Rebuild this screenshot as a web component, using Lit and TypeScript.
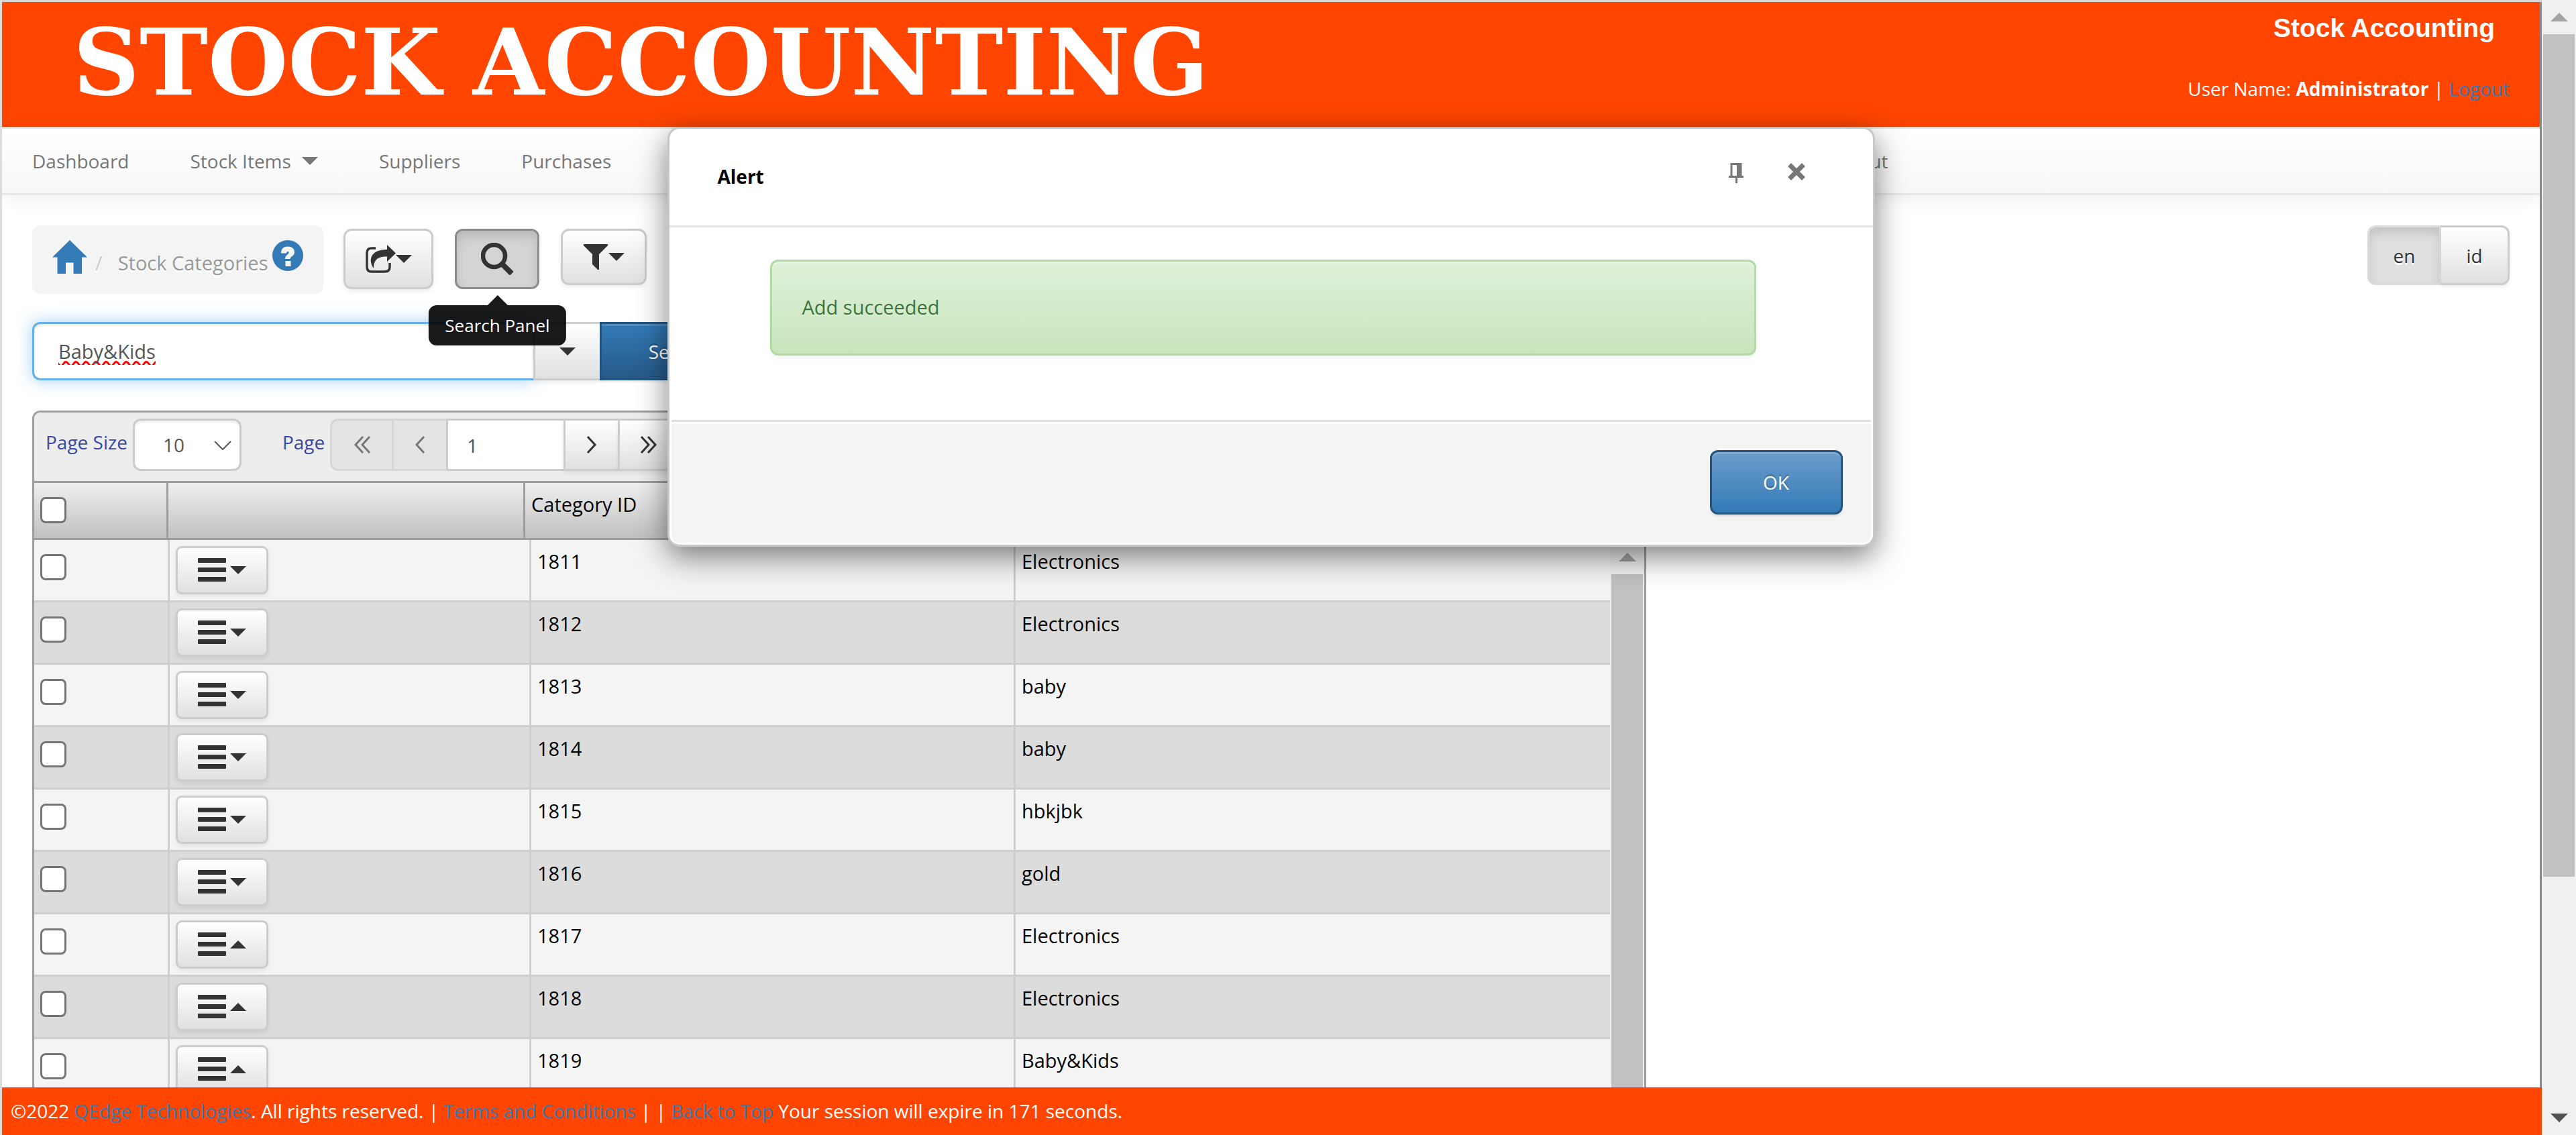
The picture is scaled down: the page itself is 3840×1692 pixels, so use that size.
import { LitElement, html, css, svg } from "lit";
import { customElement, state } from "lit/decorators.js";
import { classMap } from "lit/directives/class-map.js";

interface Category {
  id: number;
  name: string;
  up?: boolean;
}

const CATEGORIES: Category[] = [
  { id: 1811, name: "Electronics" },
  { id: 1812, name: "Electronics" },
  { id: 1813, name: "baby" },
  { id: 1814, name: "baby" },
  { id: 1815, name: "hbkjbk" },
  { id: 1816, name: "gold" },
  { id: 1817, name: "Electronics", up: true },
  { id: 1818, name: "Electronics", up: true },
  { id: 1819, name: "Baby&Kids", up: true },
];

const icon = (w: number, h: number, body: unknown) =>
  html`<svg class="icon" width=${w} height=${h} viewBox="0 0 ${w} ${h}" aria-hidden="true">${body}</svg>`;

const caretDown = () => icon(24, 12, svg`<path d="M0 0H24L12 12Z" fill="currentColor"/>`);
const caretUp = () => icon(24, 12, svg`<path d="M0 12H24L12 0Z" fill="currentColor"/>`);
const home = () => icon(52, 50, svg`<path d="M26 0L52 25.500H44V50H31.500V33.500H20V50H7.500V25.500H0Z" fill="currentColor"/>`);
const question = () =>
  icon(46, 46, svg`<circle cx="23" cy="23" r="23" fill="currentColor"/>
    <path d="M13 19.500C13 12.500 17 9.500 23 9.500S33 12.500 33 18C33 24 26.500 24 26.500 28H19C19 22 24.500 21.500 24.500 18.500C24.500 16.500 21.500 16.500 21 19.500Z" fill="#f4f4f4"/>
    <rect x="19.500" y="31" width="8" height="8" fill="#f4f4f4"/>`);
const share = () =>
  icon(45, 42, svg`<path d="M15 5H9Q2 5 2 12V33Q2 40 9 40H28Q36 40 36 33V27" fill="none" stroke="currentColor" stroke-width="3.500"/>
    <path d="M32 0L45 12.500L32 25V17.500C20 17 12 21 12 35C4 24 6 7 32 7Z" fill="currentColor"/>`);
const magnifier = () =>
  icon(48, 48, svg`<circle cx="19.500" cy="19.500" r="16.500" fill="none" stroke="currentColor" stroke-width="6.500"/>
    <path d="M32 32L43 43" stroke="currentColor" stroke-width="8" stroke-linecap="square"/>`);
const funnel = () =>
  icon(38, 38, svg`<path d="M1 0H37Q38 1 37 2L24 15V38H22L14 30V15L1 2Q0 1 1 0Z" fill="currentColor"/>`);
const bars = () =>
  icon(42, 36, svg`<g fill="currentColor"><rect y="0" width="42" height="7" rx="1"/><rect y="14" width="42" height="7" rx="1"/><rect y="28" width="42" height="7" rx="1"/></g>`);
const stroke = (w: number, d: string) =>
  icon(w, 26, svg`<path d=${d} fill="none" stroke="currentColor" stroke-width="3"/>`);
const first = () => stroke(26, "M14 1L3 13L14 25M24 1L13 13L24 25");
const prev = () => stroke(16, "M14 1L3 13L14 25");
const next = () => stroke(16, "M2 1L13 13L2 25");
const last = () => stroke(26, "M2 1L13 13L2 25M12 1L23 13L12 25");
const pin = () =>
  icon(22, 30, svg`<path d="M4 1.500H18V20M4 0V20" fill="none" stroke="currentColor" stroke-width="3"/>
    <path d="M12 1H19V20H12ZM0 19H22V22H0ZM10 22H13V30H10Z" fill="currentColor"/>`);
const cross = () =>
  icon(26, 26, svg`<path d="M5 5L21 21M21 5L5 21" stroke="currentColor" stroke-width="7" stroke-linecap="square"/>`);
const scrollUp = () => icon(26, 13, svg`<path d="M0 13H26L13 0Z" fill="currentColor"/>`);
const scrollDown = () => icon(26, 13, svg`<path d="M0 0H26L13 13Z" fill="currentColor"/>`);

@customElement("app-root")
export class AppRoot extends LitElement {
  @state() private alertOpen = true;

  static styles = css`
    :host {
      display: block;
      height: 100vh;
      overflow: hidden;
      background: #fff;
      color: #000;
      font: 28px/40px "Open Sans", "Noto Sans", sans-serif;
    }
    * { box-sizing: border-box; }
    button, input, select { font: inherit; margin: 0; }
    a { color: #337ab7; text-decoration: none; }
    ul { list-style: none; margin: 0; padding: 0; display: flex; gap: 1px; }
    .icon { display: block; flex: none; }

    .window { display: flex; height: 100%; }
    .page {
      flex: 1; min-width: 0; display: flex; flex-direction: column;
      position: relative; border-left: 3px solid #dcdcdc; border-top: 3px solid #d8d8d8;
    }
    .body {
      flex: 1; min-height: 0; overflow: hidden; display: flex; flex-direction: column;
      border-right: 3px solid #8a8a8a;
    }

    .banner {
      flex: none; height: 186px; background: #ff4500; color: #fff;
      display: flex; justify-content: space-between; align-items: flex-start;
    }
    .logo {
      margin: 0; padding: 10px 0 0 106px;
      font: bold 137px/160px "DejaVu Serif", serif; white-space: nowrap;
    }
    .account { text-align: right; padding: 15px 45px 0 0; }
    .product { margin: 0; padding-right: 22px; font: bold 39px/48px "Liberation Sans", Arial, sans-serif; }
    .user { margin: 0; padding-top: 46px; }

    .nav {
      flex: none; height: 102px; border-top: 3px solid #e7e7e7; border-bottom: 3px solid #e7e7e7;
      background: linear-gradient(#fff, #f8f8f8); box-shadow: 0 3px 27px rgba(0, 0, 0, .075);
      display: flex; align-items: center; justify-content: space-between;
    }
    .nav-end { width: calc(29% + 10px); }
    .nav a { color: #777; padding: 0 45px; display: flex; align-items: center; gap: 16px; }

    .content { padding: 45px 45px 0; }
    .toolbar { display: flex; align-items: flex-start; gap: 30px; }
    .crumbs {
      height: 102px; padding: 0 30px; border-radius: 12px; background: #f4f4f4;
      display: flex; align-items: flex-start; color: #999; font-size: 29px; text-shadow: 0 3px 0 #fff;
    }
    .crumbs a { padding-top: 22px; }
    .crumbs .here { padding: 36px 7px 0 23px; }
    .crumbs .sep { padding: 36px 0 0 12px; color: #ccc; }
    .tools { display: flex; align-items: flex-start; gap: 32px; padding-top: 5px; }
    .btn {
      display: flex; align-items: center; justify-content: center; padding: 0;
      border: 3px solid #ccc; border-radius: 12px; color: #333;
      background: linear-gradient(#fff, #e0e0e0); text-shadow: 0 3px 0 #fff;
      box-shadow: 0 3px 6px rgba(0, 0, 0, .075);
    }
    .tool { height: 90px; width: 134px; }
    .tool-wrap { position: relative; }
    .pressed {
      width: 126px; border-color: #8c8c8c; background: #d4d4d4;
      box-shadow: inset 0 9px 15px rgba(0, 0, 0, .125);
    }
    .short { height: 84px; width: 128px; }
    .tip {
      position: absolute; top: 114px; left: 50%; transform: translateX(-50%);
      padding: 10px 24px; border-radius: 12px; background: rgba(0, 0, 0, .9); color: #fff;
      font-size: 26px; white-space: nowrap; z-index: 2;
    }
    .tip::before {
      content: ""; position: absolute; top: -15px; left: 50%; margin-left: -15px;
      border: 15px solid transparent; border-top: 0; border-bottom-color: rgba(0, 0, 0, .9);
    }
    .langs { display: flex; margin-left: auto; }
    .lang { height: 89px; width: 102px; }
    .lang.active {
      width: 110px; border-color: #dbdbdb; border-radius: 12px 0 0 12px; background: #e0e0e0;
      box-shadow: inset 0 9px 15px rgba(0, 0, 0, .125);
    }
    .lang.other { border-left: 0; border-radius: 0 12px 12px 0; }

    .search { display: flex; margin-top: 42px; height: 87px; }
    .term {
      width: 747px; padding: 0 36px; border: 3px solid #66afe9; border-right: 0; border-radius: 12px 0 0 12px;
      background: #fff; color: #555; outline: 0; font-size: 29px;
      text-decoration: underline wavy #f00 3px; text-underline-offset: 3px; text-decoration-skip-ink: none;
      box-shadow: inset 0 3px 3px rgba(0, 0, 0, .075), 0 0 24px rgba(102, 175, 233, .6);
    }
    .mode { position: relative; width: 99px; border-radius: 0; border-right-width: 0; }
    .primary {
      border-color: #245580; color: #fff; text-shadow: 0 -3px 0 rgba(0, 0, 0, .2);
      background: linear-gradient(#337ab7, #265a88);
      box-shadow: inset 0 3px 0 rgba(255, 255, 255, .15), 0 3px 3px rgba(0, 0, 0, .075);
    }
    .go { width: 234px; border-radius: 0 12px 12px 0; }

    .grid { width: 2406px; max-width: 100%; margin-top: 45px; border: 3px solid #9e9e9e; border-radius: 12px 12px 0 0; overflow: hidden; }
    .pager {
      height: 105px; padding: 9px 17px; display: flex; align-items: flex-start;
      background: #ededed; border-bottom: 3px solid #9e9e9e;
    }
    .pager label { color: #3a49a2; padding: 15px 8px 0 0; white-space: nowrap; }
    .size-wrap { position: relative; margin-right: 61px; color: #555; }
    .size-wrap .chev { position: absolute; right: 15px; top: 33px; pointer-events: none; }
    .size {
      appearance: none; width: 162px; height: 78px; padding: 6px 42px; color: #555; background: #fff;
      border: 3px solid #ccc; border-radius: 12px; box-shadow: inset 0 3px 3px rgba(0, 0, 0, .075);
    }
    .step { width: 81px; height: 78px; border-radius: 0; border-right-width: 0; }
    .step.outer { width: 92px; }
    .step.start { border-radius: 12px 0 0 12px; }
    .step.end { border-right-width: 3px; border-radius: 0 12px 12px 0; }
    .step:disabled { color: #777; border-color: #d6d6d6; background: #e4e4e4; box-shadow: none; }
    .number {
      width: 175px; height: 78px; padding: 2px 28px 0; border: 3px solid #ccc; border-right: 0;
      background: #fff; color: #555; border-radius: 0;
    }

    table { border-collapse: separate; border-spacing: 0; table-layout: fixed; width: 100%; font-size: 29px; }
    th, td { padding: 0; text-align: left; font-weight: 400; vertical-align: top; }
    th {
      height: 85px; padding: 12px 9px 0; border-right: 3px solid #9e9e9e; border-bottom: 3px solid #9e9e9e;
      background: linear-gradient(#f0f0f0, #c0c0c0);
    }
    th:last-child { border-right: 0; }
    .h-check { width: 200px; }
    .h-menu { width: 532px; }
    .h-id { width: 722px; }
    td { height: 93px; padding: 12px 9px 0; border-right: 3px solid #cecece; border-bottom: 3px solid #cecece; }
    td:last-child { border-right: 0; }
    .c-check { width: 202px; }
    .c-menu { width: 539px; }
    .c-id { width: 722px; }
    tbody tr { background: #f4f4f4; }
    tbody tr.alt { background: #dcdcdc; }
    .check {
      appearance: none; display: block; width: 39px; height: 39px; margin-top: 9px;
      border: 3px solid #767676; border-radius: 8px; background: #fff;
    }
    .menu-cell { padding-top: 9px; }
    .menu { width: 138px; height: 72px; gap: 6px; border-radius: 9px; }
    .rows { display: flex; }

    .scroll { flex: none; width: 51px; background: #f0f0f0; display: flex; flex-direction: column; align-items: center; color: #a3a3a3; }
    .arrow { flex: none; height: 51px; display: flex; align-items: center; }
    .thumb { width: 47px; background: #c1c1c1; flex: 1; }
    .track { flex: 1; display: flex; flex-direction: column; }
    .track .thumb { flex: 0 0 79%; }
    .arrow.on { color: #505050; }

    .footer { flex: none; height: 71px; padding: 13px; background: #ff4500; color: #fff; line-height: 44px; white-space: nowrap; }

    .layer { position: absolute; top: 186px; left: -3px; right: 0; display: flex; justify-content: center; z-index: 3; pointer-events: none; }
    .modal {
      width: 1800px; max-width: 100%; pointer-events: auto; background: #fff; border: 3px solid #c8c8c8; border-radius: 18px;
      box-shadow: 0 15px 45px rgba(0, 0, 0, .5); padding-bottom: 3px;
    }
    .modal-head { height: 147px; padding: 0 98px 0 72px; border-bottom: 3px solid #e5e5e5; display: flex; align-items: flex-start; gap: 60px; }
    .modal-title { margin: 0; flex: 1; padding-top: 51px; font-size: 28px; line-height: 40px; }
    .plain { border: 0; background: none; padding: 51px 3px 0; color: #777; }
    .modal-body { padding: 48px 174px 96px 150px; }
    .success {
      margin: 0; height: 143px; padding: 48px 45px; border: 3px solid #b2dba1; border-radius: 12px; color: #3c763d; font-size: 29px;
      background: linear-gradient(#dff0d8, #c8e5bc); text-shadow: 0 3px 0 rgba(255, 255, 255, .2);
      box-shadow: inset 0 3px 0 rgba(255, 255, 255, .25), 0 3px 6px rgba(0, 0, 0, .05);
    }
    .modal-foot {
      margin: 0 3px; height: 183px; padding: 42px 42px 0; display: flex; justify-content: flex-end;
      border-top: 3px solid #ddd; background: #f4f4f4; box-shadow: inset 0 3px 0 #fff; border-radius: 0 0 12px 12px;
    }
    .ok { width: 198px; height: 96px; background: linear-gradient(#6b9dcb, #337ab7); }
  `;

  private scrollArrow(up: boolean, on = false) {
    return html`<div class=${classMap({ arrow: true, on })}>${up ? scrollUp() : scrollDown()}</div>`;
  }

  private row(c: Category, i: number) {
    return html`<tr class=${classMap({ alt: i % 2 === 1 })}>
      <td><input class="check" type="checkbox" aria-label=${c.id}></td>
      <td class="menu-cell">
        <button class="btn menu" aria-label="Menu">${bars()}${c.up ? caretUp() : caretDown()}</button>
      </td>
      <td>${c.id}</td>
      <td>${c.name}</td>
    </tr>`;
  }

  private modal() {
    const close = () => (this.alertOpen = false);
    return html`<div class="layer">
      <section class="modal" role="dialog" aria-labelledby="alert-title">
        <div class="modal-head">
          <h2 class="modal-title" id="alert-title">Alert</h2>
          <button class="plain" aria-label="Pin">${pin()}</button>
          <button class="plain" aria-label="Close" @click=${close}>${cross()}</button>
        </div>
        <div class="modal-body"><p class="success">Add succeeded</p></div>
        <div class="modal-foot"><button class="btn primary ok" @click=${close}>OK</button></div>
      </section>
    </div>`;
  }

  render() {
    return html`<div class="window">
      <div class="page">
        <div class="body">
          <header class="banner">
            <h1 class="logo">STOCK ACCOUNTING</h1>
            <div class="account">
              <p class="product">Stock Accounting</p>
              <p class="user">User Name: <b>Administrator</b> | <a href="#">Logout</a></p>
            </div>
          </header>
          <nav class="nav">
            <ul>
              <li><a href="#">Dashboard</a></li>
              <li><a href="#">Stock Items ${caretDown()}</a></li>
              <li><a href="#">Suppliers</a></li>
              <li><a href="#">Purchases</a></li>
            </ul>
            <ul class="nav-end"><li><a href="#">Logout</a></li></ul>
          </nav>
          <main class="content">
            <div class="toolbar">
              <div class="crumbs">
                <a href="#" aria-label="Home">${home()}</a>
                <span class="sep">/</span>
                <span class="here">Stock Categories</span>
                <a href="#" aria-label="Help">${question()}</a>
              </div>
              <div class="tools">
                <button class="btn tool" aria-label="Export">${share()}${caretDown()}</button>
                <div class="tool-wrap">
                  <button class="btn tool pressed" aria-labelledby="tip">${magnifier()}</button>
                  <div class="tip" role="tooltip" id="tip">Search Panel</div>
                </div>
                <button class="btn tool short" aria-label="Filter">${funnel()}${caretDown()}</button>
              </div>
              <div class="langs">
                <button class="btn lang active">en</button>
                <button class="btn lang other">id</button>
              </div>
            </div>

            <form class="search" @submit=${(e: Event) => e.preventDefault()}>
              <input class="term" type="text" aria-label="Search" .value=${"Baby&Kids"}>
              <button class="btn mode" type="button" aria-label="Search type">${caretDown()}</button>
              <button class="btn primary go">Search</button>
            </form>

            <section class="grid">
              <div class="pager">
                <label for="size">Page Size</label>
                <div class="size-wrap">
                  <select class="size" id="size"><option>10</option></select>
                  <span class="chev">${icon(26, 14, svg`<path d="M1 1L13 13L25 1" fill="none" stroke="currentColor" stroke-width="2"/>`)}</span>
                </div>
                <label for="page">Page</label>
                <button class="btn step outer start" disabled aria-label="First">${first()}</button>
                <button class="btn step" disabled aria-label="Previous">${prev()}</button>
                <input class="number" id="page" type="text" .value=${"1"}>
                <button class="btn step" aria-label="Next">${next()}</button>
                <button class="btn step outer end" aria-label="Last">${last()}</button>
              </div>
              <table>
                <thead>
                  <tr>
                    <th class="h-check"><input class="check" type="checkbox" aria-label="Select all"></th>
                    <th class="h-menu"></th>
                    <th class="h-id">Category ID</th>
                    <th></th>
                  </tr>
                </thead>
              </table>
              <div class="rows">
                <table>
                  <colgroup><col class="c-check"><col class="c-menu"><col class="c-id"><col></colgroup>
                  <tbody>${CATEGORIES.map((c, i) => this.row(c, i))}</tbody>
                </table>
                <div class="scroll">${this.scrollArrow(true)}<div class="thumb"></div></div>
              </div>
            </section>
          </main>
        </div>
        <footer class="footer">
          ©2022 <a href="#">QEdge Technologies</a>. All rights reserved. | <a href="#">Terms and Conditions</a> | | <a href="#">Back to Top</a> Your session will expire in 171 seconds.
        </footer>
        ${this.alertOpen ? this.modal() : ""}
      </div>
      <div class="scroll">
        ${this.scrollArrow(true)}
        <div class="track"><div class="thumb"></div></div>
        ${this.scrollArrow(false, true)}
      </div>
    </div>`;
  }
}
